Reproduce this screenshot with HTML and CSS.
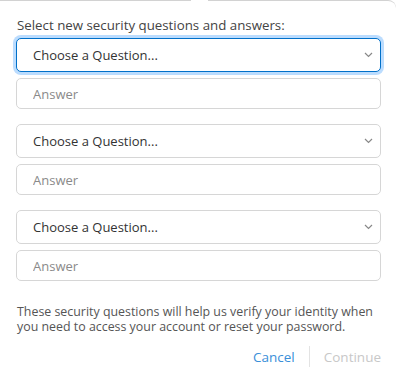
FILE: index.html
```html
<!DOCTYPE html>
<html lang="en">
<head>
  <meta charset="UTF-8">
  <title>Security Questions</title>
  <link rel="stylesheet" href="styles.css">
</head>
<body>
  <div class="popover">
    <p class="title">Select new security questions and answers:</p>

    <div class="group">
      <div class="select-wrap">
        <select class="field select focus">
          <option>Choose a Question...</option>
        </select>
        <svg class="chevron" width="9" height="6" viewBox="0 0 9 6"><path d="M1 1l3.5 3.5L8 1" fill="none" stroke="#888" stroke-width="1.2"/></svg>
      </div>
      <input type="text" class="field answer" placeholder="Answer">
    </div>

    <div class="group">
      <div class="select-wrap">
        <select class="field select">
          <option>Choose a Question...</option>
        </select>
        <svg class="chevron" width="9" height="6" viewBox="0 0 9 6"><path d="M1 1l3.5 3.5L8 1" fill="none" stroke="#888" stroke-width="1.2"/></svg>
      </div>
      <input type="text" class="field answer" placeholder="Answer">
    </div>

    <div class="group">
      <div class="select-wrap">
        <select class="field select">
          <option>Choose a Question...</option>
        </select>
        <svg class="chevron" width="9" height="6" viewBox="0 0 9 6"><path d="M1 1l3.5 3.5L8 1" fill="none" stroke="#888" stroke-width="1.2"/></svg>
      </div>
      <input type="text" class="field answer" placeholder="Answer">
    </div>

    <p class="note">These security questions will help us verify your identity when you need to access your account or reset your password.</p>

    <div class="actions">
      <button class="link">Cancel</button>
      <span class="divider"></span>
      <button class="link disabled" disabled>Continue</button>
    </div>
  </div>
</body>
</html>
```

FILE: styles.css
```css
body { margin: 0; background: #fff; font-family: "Open Sans", Arial, sans-serif; color: #333; }
.popover {
  position: relative;
  height: 382px;
  box-sizing: border-box;
  padding: 15px 15px 0 16px;
  border-top: 1px solid #d2d2d2;
  border-top-right-radius: 8px;
}
.popover::before {
  content: "";
  position: absolute;
  top: -1px;
  left: 191px;
  width: 17px;
  height: 2px;
  background: #fff;
}
.title {
  margin: 0 0 4px 1px;
  font-size: 13.3px;
  line-height: 18px;
  color: #444;
}
.group {
  display: flex;
  flex-direction: column;
  gap: 6px;
  margin-bottom: 15px;
}
.select-wrap { position: relative; }
.field {
  display: block;
  width: 100%;
  box-sizing: border-box;
  margin: 0;
  padding: 0 16px;
  border: 1px solid #d6d6d6;
  border-radius: 5px;
  background: #fff;
  font-family: inherit;
  font-size: 13px;
  color: #333;
  outline: none;
}
.select {
  height: 34px;
  appearance: none;
  -webkit-appearance: none;
}
.select.focus {
  border-color: #0070c9;
  box-shadow: 0 0 0 3px rgba(131, 192, 253, 0.55);
}
.answer { height: 31px; }
.answer::placeholder { color: #8a8a8a; }
.chevron {
  position: absolute;
  right: 8px;
  top: 14px;
  pointer-events: none;
}
.note {
  margin: 23px 0 0 1px;
  font-size: 12.4px;
  line-height: 15px;
  color: #555;
}
.actions {
  display: flex;
  justify-content: flex-end;
  align-items: center;
  margin-top: 12px;
}
.link {
  border: none;
  background: none;
  padding: 0;
  font-family: inherit;
  font-size: 13.5px;
  color: #3b8fd9;
  cursor: pointer;
}
.link.disabled { color: #c8c8c8; cursor: default; }
.divider {
  width: 1px;
  height: 21px;
  margin: 0 14px;
  background: #e3e3e3;
}
```
